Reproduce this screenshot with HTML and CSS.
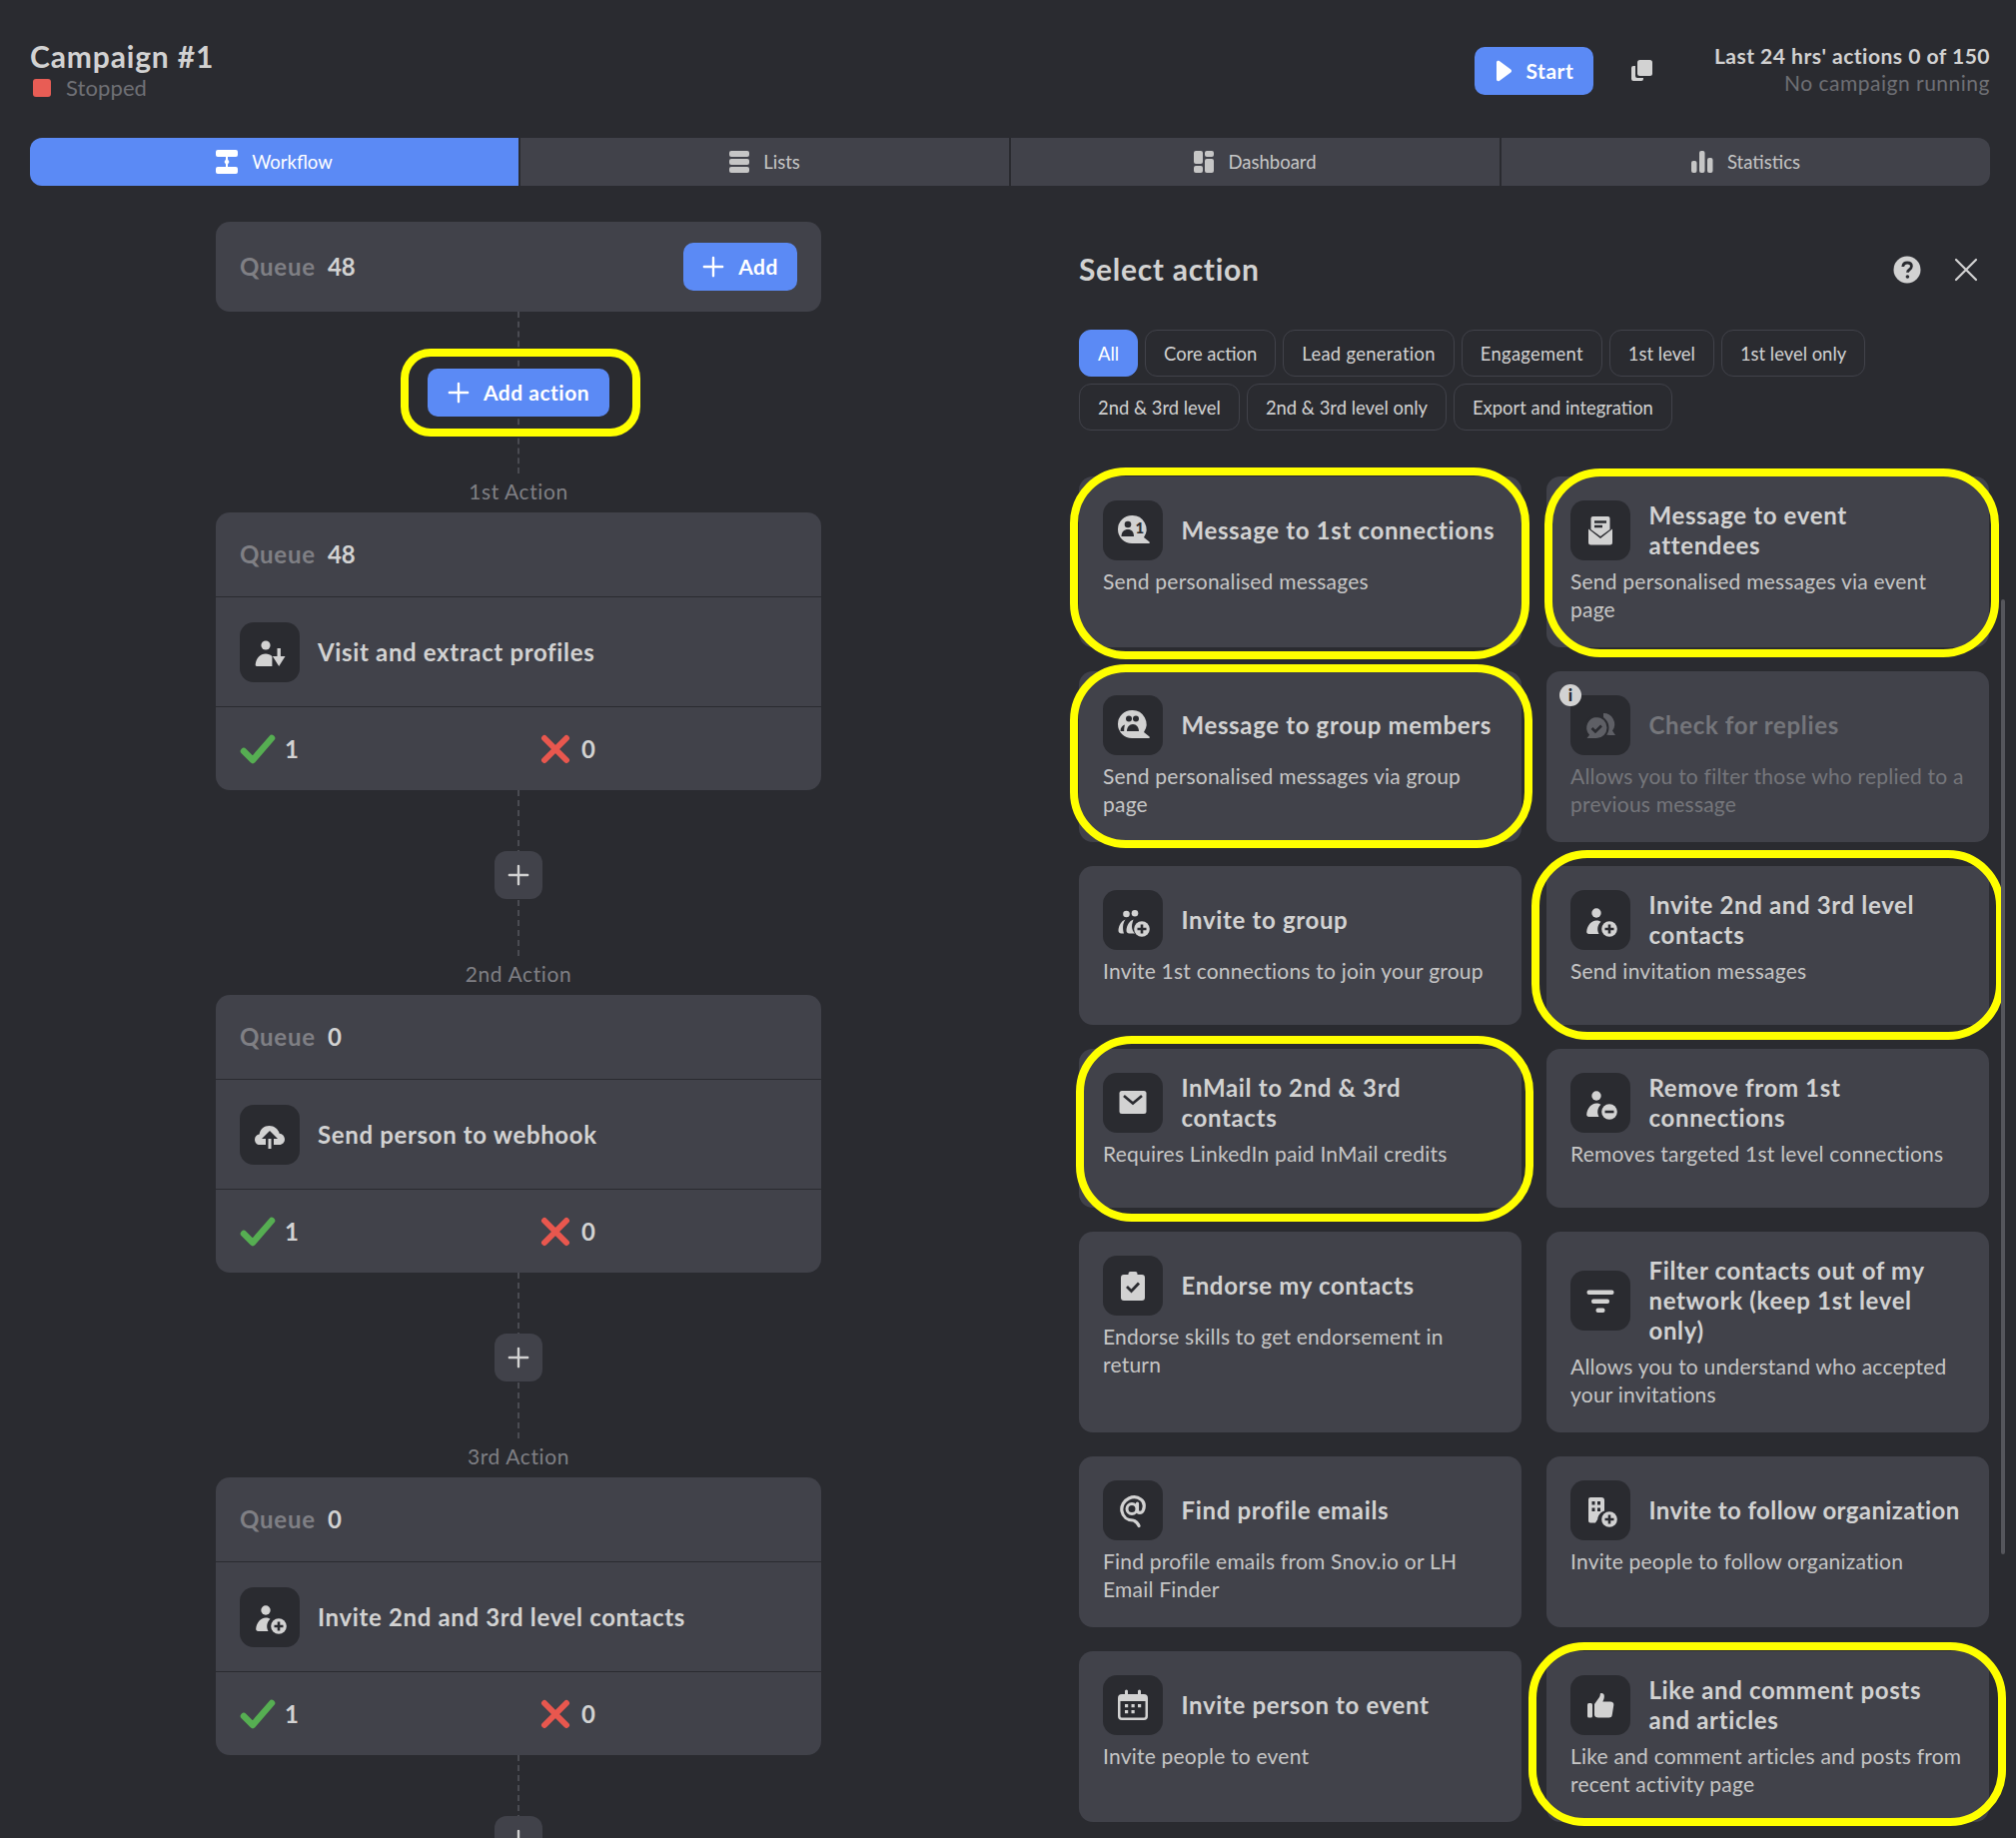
FILE: index.html
```html
<!DOCTYPE html>
<html lang="en">
<head>
    <meta charset="UTF-8">
    <title>Campaign #1</title>
    <link rel="stylesheet" href="styles.css">
</head>
<body>
<svg class="defs" width="0" height="0">
    <symbol id="i-plus" viewBox="0 0 24 24"><path d="M12 2v20M2 12h20" fill="none" stroke="currentColor" stroke-width="2.6" stroke-linecap="round"/></symbol>
    <symbol id="i-visit" viewBox="0 0 60 60"><circle cx="26" cy="23" r="4.6"/><path d="M17 44c-1 0-1.5-.8-1.3-2 .8-6 4.5-10.5 10.3-10.5 2.5 0 4.8.9 6.4 2.5V44z"/><path d="M37.5 26h3.400v8h4.600l-6.300 10-6.300-10h4.600z"/></symbol>
    <symbol id="i-webhook" viewBox="0 0 60 60"><path d="M20 40c-3 0-5-2.400-5-5.300 0-2.800 2-5 4.600-5.300C20.300 24.500 24.500 21 29.500 21c5 0 9 3.300 10.200 7.700 3 .2 5.300 2.800 5.300 5.800 0 3-2.400 5.500-5.300 5.500H34v-6h4l-8-8-8 8h4v6z"/><path d="M28.500 34h3v10h-3z"/></symbol>
    <symbol id="i-person" viewBox="0 0 60 60"><circle cx="26" cy="23" r="4.700"/><path d="M18.500 44c-1.500 0-2.500-1-2.300-2.500.7-6 4.500-11 9.800-11 1.700 0 3.200.5 4.500 1.300-2 1.800-3.300 4.400-3.300 7.200 0 1.800.5 3.500 1.300 5z"/></symbol>
    <symbol id="i-disc-plus" viewBox="0 0 60 60"><circle cx="39" cy="39" r="7.800"/><path d="M39 34.500v9M34.500 39h9" fill="none" stroke="#2a2b30" stroke-width="2.600"/></symbol>
    <symbol id="i-disc-minus" viewBox="0 0 60 60"><circle cx="39" cy="39" r="7.800"/><path d="M34.500 39h9" fill="none" stroke="#2a2b30" stroke-width="2.600"/></symbol>
    <symbol id="i-bubble" viewBox="0 0 60 60"><path d="M29 15a14 14 0 0 0 0 28h17c.8 0 1.200-.9.6-1.500L41 37a14 14 0 0 0-12-22z"/></symbol>
    <symbol id="i-check" viewBox="0 0 36 30"><path d="M4 17l9 9L32 4" fill="none" stroke="#56ae52" stroke-width="6.500" stroke-linecap="round" stroke-linejoin="round"/></symbol>
    <symbol id="i-cross" viewBox="0 0 30 30"><path d="M4 4l22 22M26 4L4 26" fill="none" stroke="#e8574e" stroke-width="6" stroke-linecap="round"/></symbol>
</svg>

<header class="top">
    <div>
        <div class="camp-title">Campaign #1</div>
        <div class="camp-status"><span class="stop-dot"></span>Stopped</div>
    </div>
    <div class="top-right">
        <button class="btn btn-start">
            <svg width="18" height="24" viewBox="0 0 18 24"><path d="M2 3.500v17c0 1.500 1.500 2.200 2.800 1.400l11.500-8.500c1-.7 1-2.100 0-2.800L4.800 2.100C3.500 1.300 2 2 2 3.500z" fill="#fff"/></svg>
            Start
        </button>
        <svg class="copy-icon" width="22" height="24" viewBox="0 0 22 24"><rect x="7" y="1" width="15" height="16" rx="2.500" fill="#d2d2d2"/><path d="M5 7H3a2 2 0 0 0-2 2v11a2 2 0 0 0 2 2h8a2 2 0 0 0 2-2v-1H7a2 2 0 0 1-2-2z" fill="#d2d2d2"/></svg>
        <div class="limits">
            <div class="limits-main">Last 24 hrs' actions 0 of 150</div>
            <div class="limits-sub">No campaign running</div>
        </div>
    </div>
</header>

<nav class="tabs">
    <div class="tab tab-active">
        <svg width="22" height="24" viewBox="0 0 22 24" fill="currentColor"><rect x="0" y="0" width="22" height="7" rx="2"/><rect x="0" y="17" width="22" height="7" rx="2"/><path d="M10 6h2v3.500l1.500 2.500-1.500 2.500V18h-2v-3.500L8.500 12 10 9.500z"/></svg>
        Workflow
    </div>
    <div class="tab">
        <svg width="20" height="22" viewBox="0 0 20 22" fill="currentColor"><rect width="20" height="6" y="0" rx="2"/><rect width="20" height="6" y="8" rx="2"/><rect width="20" height="6" y="16" rx="2"/></svg>
        Lists
    </div>
    <div class="tab">
        <svg width="20" height="22" viewBox="0 0 20 22" fill="currentColor"><rect width="9" height="13" rx="2"/><rect x="11" width="9" height="6" rx="2"/><rect y="15" width="9" height="7" rx="2"/><rect x="11" y="8" width="9" height="14" rx="2"/></svg>
        Dashboard
    </div>
    <div class="tab">
        <svg width="22" height="22" viewBox="0 0 22 22" fill="currentColor"><rect y="10" width="5.500" height="12" rx="2"/><rect x="8" width="5.500" height="22" rx="2"/><rect x="16" y="7" width="5.500" height="15" rx="2"/></svg>
        Statistics
    </div>
</nav>

<main class="layout">
    <section class="flow">
        <div class="box box-first">
            <div class="queue"><span class="queue-label">Queue</span><b>48</b></div>
            <button class="btn btn-add"><svg class="plus"><use href="#i-plus"/></svg>Add</button>
        </div>

        <div class="link link-first">
            <div class="btn-wrap">
                <button class="btn btn-action"><svg class="plus"><use href="#i-plus"/></svg>Add action</button>
                <div class="ring ring-add"></div>
            </div>
            <div class="link-label">1st Action</div>
        </div>

        <div class="box">
            <div class="row row-queue"><span class="queue-label">Queue</span><b>48</b></div>
            <div class="row row-step">
                <div class="icon-box"><svg><use href="#i-visit"/></svg></div>
                <div class="step-name">Visit and extract profiles</div>
            </div>
            <div class="row row-stats">
                <div class="stat"><svg class="ok"><use href="#i-check"/></svg>1</div>
                <div class="stat"><svg class="ko"><use href="#i-cross"/></svg>0</div>
            </div>
        </div>

        <div class="link">
            <div class="btn-wrap"><button class="plus-btn"><svg class="plus"><use href="#i-plus"/></svg></button></div>
            <div class="link-label">2nd Action</div>
        </div>

        <div class="box">
            <div class="row row-queue"><span class="queue-label">Queue</span><b>0</b></div>
            <div class="row row-step">
                <div class="icon-box"><svg><use href="#i-webhook"/></svg></div>
                <div class="step-name">Send person to webhook</div>
            </div>
            <div class="row row-stats">
                <div class="stat"><svg class="ok"><use href="#i-check"/></svg>1</div>
                <div class="stat"><svg class="ko"><use href="#i-cross"/></svg>0</div>
            </div>
        </div>

        <div class="link">
            <div class="btn-wrap"><button class="plus-btn"><svg class="plus"><use href="#i-plus"/></svg></button></div>
            <div class="link-label">3rd Action</div>
        </div>

        <div class="box">
            <div class="row row-queue"><span class="queue-label">Queue</span><b>0</b></div>
            <div class="row row-step">
                <div class="icon-box"><svg><use href="#i-person"/><use href="#i-disc-plus"/></svg></div>
                <div class="step-name">Invite 2nd and 3rd level contacts</div>
            </div>
            <div class="row row-stats">
                <div class="stat"><svg class="ok"><use href="#i-check"/></svg>1</div>
                <div class="stat"><svg class="ko"><use href="#i-cross"/></svg>0</div>
            </div>
        </div>

        <div class="link link-last">
            <div class="btn-wrap"><button class="plus-btn"><svg class="plus"><use href="#i-plus"/></svg></button></div>
        </div>
    </section>

    <section class="panel">
        <div class="panel-head">
            <h2>Select action</h2>
            <div class="panel-tools">
                <svg width="28" height="28" viewBox="0 0 28 28"><circle cx="14" cy="14" r="13.500" fill="#d2d2d2"/><path d="M9.800 11c.2-2.600 2-4 4.400-4 2.500 0 4.200 1.500 4.200 3.600 0 1.700-1 2.600-2.200 3.400-1.100.7-1.700 1.300-1.700 2.700" fill="none" stroke="#2a2b30" stroke-width="2.800"/><circle cx="14.400" cy="21" r="1.800" fill="#2a2b30"/></svg>
                <svg width="24" height="24" viewBox="0 0 24 24"><path d="M2 2l20 20M22 2L2 22" stroke="#d2d2d2" stroke-width="2.200" stroke-linecap="round"/></svg>
            </div>
        </div>

        <div class="chips">
            <span class="chip chip-on">All</span>
            <span class="chip">Core action</span>
            <span class="chip chip-wide">Lead generation</span>
            <span class="chip chip-wide">Engagement</span>
            <span class="chip">1st level</span>
            <span class="chip">1st level only</span>
            <span class="chip">2nd &amp; 3rd level</span>
            <span class="chip">2nd &amp; 3rd level only</span>
            <span class="chip">Export and integration</span>
        </div>

        <div class="actions">
            <article class="card">
                <div class="card-head">
                    <div class="icon-box"><svg><use href="#i-bubble"/><circle cx="25" cy="24" r="3.300" fill="#2a2b30"/><path d="M18.500 36c0-4.500 2.800-7 6.500-7s6 2.500 6 7z" fill="#2a2b30"/><text x="32.500" y="33" class="icon-one">1</text></svg></div>
                    <h3>Message to 1st connections</h3>
                </div>
                <p>Send personalised messages</p>
                <div class="ring ring-a"></div>
            </article>
            <article class="card">
                <div class="card-head">
                    <div class="icon-box"><svg viewBox="0 0 60 60"><path d="M22.500 16h15a2 2 0 0 1 2 2v11L30 36l-9.500-7V18a2 2 0 0 1 2-2z"/><path d="M18 28.500L30 38l12-9.500V42a2.500 2.500 0 0 1-2.500 2.500h-19A2.500 2.500 0 0 1 18 42z"/><path d="M24 21.500h12M24 26h8" stroke="#2a2b30" stroke-width="2.400"/></svg></div>
                    <h3>Message to event<br>attendees</h3>
                </div>
                <p>Send personalised messages via event page</p>
                <div class="ring ring-b"></div>
            </article>

            <article class="card">
                <div class="card-head">
                    <div class="icon-box"><svg><use href="#i-bubble"/><circle cx="26" cy="23.500" r="3" fill="#2a2b30"/><circle cx="33" cy="23.500" r="3" fill="#2a2b30"/><path d="M17.500 36c0-3.500 2-6 4.500-6.500-.6 1.800-.8 4-.8 6.500zM24 36c0-4 2.500-7 6-7s6 3 6 7z" fill="#2a2b30"/></svg></div>
                    <h3>Message to group members</h3>
                </div>
                <p>Send personalised messages via group page</p>
                <div class="ring ring-c"></div>
            </article>
            <article class="card card-off">
                <span class="info-dot">i</span>
                <div class="card-head">
                    <div class="icon-box"><svg viewBox="0 0 60 60"><path d="M33 18a11 11 0 0 1 9 17.500l3 4.500h-6l-6-1z"/><path d="M26 21a11.500 11.500 0 0 1 0 23H14.500l3.300-4.300A11.500 11.500 0 0 1 26 21z" stroke="#2a2b30" stroke-width="2"/><path d="M21.500 33l3.500 3.500 6-6" fill="none" stroke="#2a2b30" stroke-width="2.600"/></svg></div>
                    <h3>Check for replies</h3>
                </div>
                <p>Allows you to filter those who replied to a previous message</p>
            </article>

            <article class="card">
                <div class="card-head">
                    <div class="icon-box"><svg viewBox="0 0 60 60"><circle cx="23.500" cy="24" r="3.300"/><circle cx="32" cy="23.300" r="3.300"/><path d="M22.500 29.500c-4 1.500-6.500 5.500-7 10.500-.2 2 1 3.500 3 3.500H21c-1.500-5-1.300-10 1.500-14z"/><path d="M30.500 29.500c-4 1.500-6.500 5.500-7 10.500-.2 2 1 3.500 3 3.500h5.500c-2-2-3-4.500-3-7 0-2.800 1-5 1.500-7z"/><use href="#i-disc-plus"/></svg></div>
                    <h3>Invite to group</h3>
                </div>
                <p>Invite 1st connections to join your group</p>
            </article>
            <article class="card">
                <div class="card-head">
                    <div class="icon-box"><svg><use href="#i-person"/><use href="#i-disc-plus"/></svg></div>
                    <h3>Invite 2nd and 3rd level contacts</h3>
                </div>
                <p>Send invitation messages</p>
                <div class="ring ring-d"></div>
            </article>

            <article class="card">
                <div class="card-head">
                    <div class="icon-box"><svg viewBox="0 0 60 60"><rect x="16.500" y="18" width="27" height="23" rx="2.500"/><path d="M21 23l9 7.500L39 23" fill="none" stroke="#2a2b30" stroke-width="2.600"/></svg></div>
                    <h3>InMail to 2nd &amp; 3rd<br>contacts</h3>
                </div>
                <p>Requires LinkedIn paid InMail credits</p>
                <div class="ring ring-e"></div>
            </article>
            <article class="card">
                <div class="card-head">
                    <div class="icon-box"><svg><use href="#i-person"/><use href="#i-disc-minus"/></svg></div>
                    <h3>Remove from 1st connections</h3>
                </div>
                <p>Removes targeted 1st level connections</p>
            </article>

            <article class="card">
                <div class="card-head">
                    <div class="icon-box"><svg viewBox="0 0 60 60"><path d="M27.500 16h5a2 2 0 0 1 2 2v1H39a3 3 0 0 1 3 3v20a3 3 0 0 1-3 3H21a3 3 0 0 1-3-3V22a3 3 0 0 1 3-3h4.500v-1a2 2 0 0 1 2-2z"/><path d="M24 31l4.500 4.500L36 27.500" fill="none" stroke="#2a2b30" stroke-width="2.800"/></svg></div>
                    <h3>Endorse my contacts</h3>
                </div>
                <p>Endorse skills to get endorsement in<br>return</p>
            </article>
            <article class="card">
                <div class="card-head">
                    <div class="icon-box"><svg viewBox="0 0 60 60"><rect x="16.500" y="19.500" width="27" height="4.500" rx="2"/><rect x="21" y="28.500" width="18" height="4.500" rx="2"/><rect x="25.500" y="37.500" width="9" height="4.500" rx="2"/></svg></div>
                    <h3>Filter contacts out of my network (keep 1st level<br>only)</h3>
                </div>
                <p>Allows you to understand who accepted your invitations</p>
            </article>

            <article class="card">
                <div class="card-head">
                    <div class="icon-box"><svg viewBox="0 0 60 60"><circle cx="29" cy="28.500" r="5" fill="none" stroke="currentColor" stroke-width="3"/><path d="M34.500 23v7c0 3 4.500 3.500 6-.5 1.500-4.500.3-8.500-2.500-10.500-3-2.300-8-2.800-12-1-5 2.300-8 7.500-7 13 1 5.500 5.500 9 11 9 .5 0 1 .2 1.500.5 2 1 3.500 2.500 4.500 5" fill="none" stroke="currentColor" stroke-width="3.200" stroke-linecap="round"/></svg></div>
                    <h3>Find profile emails</h3>
                </div>
                <p>Find profile emails from Snov.io or LH Email Finder</p>
            </article>
            <article class="card">
                <div class="card-head">
                    <div class="icon-box"><svg viewBox="0 0 60 60"><path d="M20 17h11a3 3 0 0 1 3 3v10.500c-3.500 1-6.500 4.500-6.800 8.500L25 42.500h-5a2 2 0 0 1-2-2V19a2 2 0 0 1 2-2z"/><path d="M21.500 21h3v3.500h-3zM27 21h3v3.500h-3zM21.500 27.500h3V31h-3zM27 27.500h3V31h-3z" fill="#2a2b30"/><use href="#i-disc-plus"/></svg></div>
                    <h3 class="one-line">Invite to follow organization</h3>
                </div>
                <p>Invite people to follow organization</p>
            </article>

            <article class="card">
                <div class="card-head">
                    <div class="icon-box"><svg viewBox="0 0 60 60"><path d="M19 19h3v-3a1.500 1.500 0 0 1 3 0v3h10v-3a1.500 1.500 0 0 1 3 0v3h3a4 4 0 0 1 4 4v18a4 4 0 0 1-4 4H19a4 4 0 0 1-4-4V23a4 4 0 0 1 4-4zm-1.500 7v15a1.500 1.500 0 0 0 1.500 1.500h22a1.500 1.500 0 0 0 1.500-1.500V26z"/><path d="M22 29h3.200v3.200H22zM28.500 29h3.200v3.200h-3.200zM35 29h3.200v3.200H35zM22 35h3.200v3.200H22zM28.500 35h3.200v3.200h-3.200z"/></svg></div>
                    <h3>Invite person to event</h3>
                </div>
                <p>Invite people to event</p>
            </article>
            <article class="card">
                <div class="card-head">
                    <div class="icon-box"><svg viewBox="0 0 60 60"><rect x="17" y="28" width="5" height="14.500" rx="1.500"/><path d="M24 29l5-7c.6-1 .8-2 .8-3 0-1.500 3.700-1.300 4 1.500.2 2-.4 4-1.500 6h7.500c2.500 0 3.800 1.300 3.500 3.500l-1.600 10c-.3 1.800-1.400 2.500-3 2.500H28c-2.400 0-4-1-4-3z"/></svg></div>
                    <h3>Like and comment posts<br>and articles</h3>
                </div>
                <p>Like and comment articles and posts from recent activity page</p>
                <div class="ring ring-f"></div>
            </article>
            <div class="scroll-thumb"></div>
        </div>
    </section>
</main>
</body>
</html>
```

FILE: styles.css
```css
* {
    box-sizing: border-box;
}

html, body {
    margin: 0;
    height: 1840px;
    overflow: hidden;
}

body {
    font-family: "Lato", "Open Sans", sans-serif;
    background-color: #2a2b30;
    color: #d2d2d2;
    padding: 0 26px 0 30px;
}

.defs {
    position: absolute;
}

button {
    font-family: inherit;
    border: none;
    cursor: pointer;
}

/* header */
.top {
    display: flex;
    justify-content: space-between;
    height: 138px;
    padding-top: 38px;
}

.camp-title {
    font-size: 30px;
    font-weight: 700;
    line-height: 36px;
    letter-spacing: 0.85px;
}

.camp-status {
    display: flex;
    align-items: center;
    font-size: 22px;
    line-height: 26px;
    color: #6f7075;
    letter-spacing: 0.1px;
    margin-top: 1px;
}

.stop-dot {
    width: 18px;
    height: 18px;
    border-radius: 3px;
    background-color: #e85d55;
    margin: 0 15px 0 3px;
}

.top-right {
    display: flex;
    align-items: flex-start;
}

.btn {
    display: flex;
    align-items: center;
    justify-content: center;
    height: 48px;
    border-radius: 10px;
    background-color: #5b8af5;
    color: #fff;
    font-size: 21px;
    font-weight: 700;
    letter-spacing: 0.5px;
    padding-bottom: 2px;
}

.btn-start {
    width: 119px;
    margin-top: 9px;
    gap: 14px;
}

.copy-icon {
    margin: 21px 0 0 37px;
}

.limits {
    margin-left: 62px;
    text-align: right;
    line-height: 27px;
    font-size: 21px;
    letter-spacing: 0.5px;
    padding-top: 4px;
}

.limits-main {
    font-weight: 700;
}

.limits-sub {
    color: #6f7075;
}

/* tabs */
.tabs {
    display: grid;
    grid-template-columns: repeat(4, 1fr);
    gap: 2px;
    height: 48px;
    width: 1962px;
    border-radius: 12px;
    overflow: hidden;
}

.tab {
    display: flex;
    align-items: center;
    justify-content: center;
    gap: 14px;
    background-color: #41424a;
    font-size: 18.5px;
    color: #c6c6c6;
    padding-bottom: 1px;
}

.tab svg {
    flex-shrink: 0;
}

.tab-active {
    background-color: #5b8af5;
    color: #fff;
}

.layout {
    display: flex;
    gap: 72px;
    padding-top: 36px;
}

/* workflow column */
.flow {
    width: 978px;
    flex-shrink: 0;
    display: flex;
    flex-direction: column;
    align-items: center;
}

.box {
    width: 606px;
    background-color: #41424a;
    border-radius: 14px;
    font-size: 24px;
}

.box-first {
    height: 90px;
    display: flex;
    align-items: center;
    justify-content: space-between;
    padding: 0 24px;
}

.queue {
    padding-bottom: 2px;
}

.queue-label {
    color: #7f7f84;
    font-weight: 700;
    margin-right: 12px;
    letter-spacing: 0.8px;
}

.box b {
    color: #d2d2d2;
}

.btn-add {
    width: 114px;
    gap: 14px;
}

.plus {
    width: 22px;
    height: 22px;
}

.row {
    display: flex;
    align-items: center;
    padding: 0 24px;
}

.row-queue {
    height: 85px;
    border-bottom: 1px solid #2a2b30;
    padding-bottom: 2px;
}

.row-step {
    height: 110px;
    gap: 18px;
    border-bottom: 1px solid #2a2b30;
}

.row-stats {
    height: 83px;
}

.step-name {
    font-weight: 700;
    font-size: 24px;
    letter-spacing: 0.65px;
}

.stat {
    display: flex;
    align-items: center;
    gap: 10px;
    flex: none;
    width: 301px;
    font-weight: 700;
}

.ok {
    width: 36px;
    height: 30px;
    margin-right: -1px;
}

.ko {
    width: 30px;
    height: 30px;
    margin-right: 1px;
}

.link {
    position: relative;
    width: 100%;
    height: 205px;
    padding-top: 61px;
    text-align: center;
}

.link::before {
    content: "";
    position: absolute;
    left: 50%;
    top: 0;
    height: 166px;
    margin-left: -1px;
    border-left: 2px dashed #4a4b52;
}

.link-first {
    height: 201px;
    padding-top: 57px;
}

.link-first::before {
    height: 162px;
}

.btn-wrap {
    position: relative;
    display: inline-block;
    vertical-align: top;
    height: 48px;
}

.btn-action {
    width: 182px;
    gap: 14px;
}

.plus-btn {
    display: flex;
    align-items: center;
    justify-content: center;
    width: 48px;
    height: 48px;
    border-radius: 12px;
    background-color: #41424a;
    color: #d2d2d2;
}

.link-label {
    position: absolute;
    left: 0;
    right: 0;
    bottom: 8px;
    line-height: 26px;
    font-size: 21px;
    letter-spacing: 0.6px;
    color: #7f7f84;
}

/* select action panel */
.panel {
    width: 912px;
    flex-shrink: 0;
}

.panel-head {
    display: flex;
    align-items: center;
    justify-content: space-between;
    height: 48px;
    margin-top: 24px;
    padding-right: 12px;
}

.panel-head h2 {
    margin: 0 0 2px;
    font-size: 30px;
    font-weight: 700;
    letter-spacing: 0.7px;
}

.panel-tools {
    display: flex;
    align-items: center;
    gap: 33px;
}

.chips {
    display: flex;
    flex-wrap: wrap;
    gap: 7px;
    margin-top: 36px;
    width: 820px;
}

.chip {
    display: flex;
    align-items: center;
    height: 47px;
    padding: 0 18px;
    border: 1px solid #41424a;
    border-radius: 12px;
    font-size: 18.4px;
}

.chip-wide {
    letter-spacing: 0.3px;
}

.chip-on {
    background-color: #5b8af5;
    border-color: #5b8af5;
    color: #fff;
}

.actions {
    position: relative;
    display: grid;
    grid-template-columns: 443px 443px;
    column-gap: 25px;
    row-gap: 24px;
    margin-top: 46px;
}

.card {
    position: relative;
    min-height: 159px;
    padding: 24px 24px 25px;
    background-color: #41424a;
    border-radius: 14px;
}

.card-head {
    display: flex;
    align-items: center;
    gap: 18.5px;
}

.card h3 {
    margin: 0;
    font-size: 24px;
    line-height: 30px;
    font-weight: 700;
    letter-spacing: 0.65px;
}

.card h3.one-line {
    white-space: nowrap;
    letter-spacing: 0.4px;
}

.card p {
    margin: 7px 0 0;
    font-size: 21px;
    line-height: 27.5px;
    letter-spacing: 0.22px;
    color: #c6c6c6;
}

.icon-box {
    flex-shrink: 0;
    width: 60px;
    height: 60px;
    border-radius: 14px;
    background-color: #2a2b30;
    color: #d2d2d2;
    fill: currentColor;
}

.icon-box svg {
    display: block;
    width: 60px;
    height: 60px;
}

.icon-one {
    font-size: 15px;
    font-weight: 900;
    fill: #2a2b30;
}

.card-off h3,
.card-off p {
    color: #75767b;
}

.card-off .icon-box {
    color: #5e5f65;
}

.info-dot {
    position: absolute;
    left: 13px;
    top: 13px;
    width: 22px;
    height: 22px;
    border-radius: 50%;
    background-color: #d2d2d2;
    color: #2a2b30;
    font-size: 17px;
    font-weight: 900;
    line-height: 22px;
    text-align: center;
}

/* yellow highlight rings drawn over the screenshot */
.ring {
    position: absolute;
    border: 8px solid #ffff00;
    border-radius: 56px;
    pointer-events: none;
}

.ring-add { inset: -20px -31px -20px -27px; border-radius: 30px; }
.ring-a { inset: -9px -8px -12px -9px; }
.ring-b { inset: -8px -10px -10px -2px; }
.ring-c { inset: -7px -11px -6px -9px; }
.ring-d { inset: -16px -15px -15px -15px; }
.ring-e { inset: -13px -12px -14px -3px; }
.ring-f { inset: -9px -17px -4px -18px; }

.scroll-thumb {
    position: absolute;
    left: 923px;
    top: 123px;
    width: 4px;
    height: 956px;
    border-radius: 2px;
    background-color: #55565c;
}
```
